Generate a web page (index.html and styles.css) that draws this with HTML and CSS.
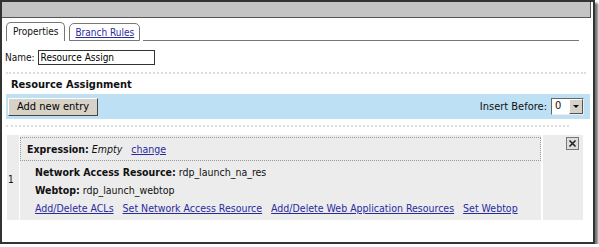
FILE: index.html
```html
<!DOCTYPE html>
<html>

<head>
    <title>Resource Assign</title>
    <link rel="stylesheet" href="styles.css">
</head>

<body>
    <div class="frame">
        <div class="titlebar"></div>

        <div class="tabs">
            <div class="tab active">Properties</div>
            <div class="tab"><a href="#">Branch Rules</a></div>
            <div class="tab-fill"></div>
        </div>

        <div class="name-row">
            <label>Name:</label>
            <input type="text" value="Resource Assign">
        </div>

        <div class="sep"></div>

        <h3>Resource Assignment</h3>
        <div class="toolbar">
            <button>Add new entry</button>
            <div class="insert">
                Insert Before:
                <span class="select"><span class="val">0</span><span class="arrow"></span></span>
            </div>
        </div>

        <div class="sep short"></div>

        <div class="entry">
            <div class="num">1</div>
            <div class="body">
                <div class="expr">
                    <strong>Expression:</strong> <em>Empty</em> <a href="#">change</a>
                </div>
                <div class="details">
                    <p><strong>Network Access Resource:</strong> rdp_launch_na_res</p>
                    <p><strong>Webtop:</strong> rdp_launch_webtop</p>
                    <p class="links">
                        <a href="#">Add/Delete ACLs</a>
                        <a href="#">Set Network Access Resource</a>
                        <a href="#">Add/Delete Web Application Resources</a>
                        <a href="#">Set Webtop</a>
                    </p>
                </div>
            </div>
            <div class="del">
                <span class="xbox">
                    <svg width="9" height="9" viewBox="0 0 9 9">
                        <path d="M1.5 1.5 L7.5 7.5 M7.5 1.5 L1.5 7.5" stroke="#222" stroke-width="1.6"/>
                    </svg>
                </span>
            </div>
        </div>
    </div>
</body>

</html>
```

FILE: styles.css
```css
body {
    margin: 0;
    padding: 0;
    background: #fff;
    font-family: "DejaVu Sans Condensed", "Liberation Sans", sans-serif;
    font-size: 10px;
    color: #111;
}

a {
    color: #2a2aa0;
}

.frame {
    width: 591px;
    height: 240px;
    border: 2px solid #333;
    box-shadow: 3px 3px 2px #777;
    background: #fff;
    overflow: hidden;
    white-space: nowrap;
}

.titlebar {
    height: 15px;
    background: #c4c4c4;
    border-bottom: 1px solid #555;
    border-right: 1px solid #555;
    margin-right: 2px;
}

.tabs {
    display: flex;
    align-items: flex-end;
    padding: 4px 14px 0 4px;
    height: 19px;
}

.tab {
    border: 1px solid #777;
    border-radius: 5px 5px 0 0;
    padding: 2px 5px 1px;
    margin-right: 3px;
    background: #fff;
    height: 13px;
    line-height: 13px;
}

.tab.active {
    border-bottom: none;
    height: 15px;
    padding: 2px 6px 1px;
    margin-right: 4px;
}

.tab-fill {
    flex: 1;
    border-bottom: 1px solid #777;
}

.name-row {
    padding: 9px 0 0 3px;
    display: flex;
    align-items: center;
    gap: 3px;
}

.name-row input {
    font: inherit;
    width: 111px;
    height: 13px;
    padding: 0 2px;
    border: 1px solid #333;
    margin: 0;
}

.sep {
    margin: 7px 7px 0 4px;
    border-top: 2px dotted #ddd;
}

.sep.short {
    margin-top: 6px;
    margin-right: 24px;
}

h3 {
    margin: 4px 0 3px 9px;
    font-size: 11px;
}

.toolbar {
    margin: 0 3px 0 4px;
    background: #bde0f5;
    height: 25px;
    display: flex;
    align-items: center;
    justify-content: space-between;
    padding: 0 6px 0 2px;
}

.toolbar button {
    font: inherit;
    font-size: 11px;
    background: #d6d2c8;
    border: 1px solid;
    border-color: #fff #444 #444 #fff;
    padding: 1px 8px;
    height: 18px;
}

.insert {
    display: flex;
    align-items: center;
    gap: 4px;
    font-size: 11px;
}

.select {
    display: flex;
    border: 1px solid;
    border-color: #666 #eee #eee #666;
    background: #fff;
    height: 15px;
}

.select .val {
    width: 14px;
    padding-left: 3px;
}

.select .arrow {
    width: 12px;
    background: #d6d2c8;
    border: 1px solid;
    border-color: #fff #555 #555 #fff;
    position: relative;
}

.select .arrow::after {
    content: "";
    position: absolute;
    left: 3px;
    top: 5px;
    border: 3px solid transparent;
    border-top: 3px solid #111;
}

.entry {
    margin: 8px 10px 0 5px;
    height: 85px;
    display: flex;
    background: #fff;
}

.num {
    width: 11px;
    background: #ececec;
    margin-right: 1px;
    display: flex;
    align-items: center;
    padding-left: 1px;
    padding-top: 4px;
}

.body {
    width: 521px;
    background: #ececec;
    padding-top: 2px;
    font-size: 10.5px;
}

.expr {
    border: 1px dotted #999;
    height: 22px;
    line-height: 22px;
    padding-left: 6px;
}

.expr a {
    margin-left: 6px;
}

.details {
    padding-left: 15px;
}

.details p {
    margin: 0;
    line-height: 18px;
}

.details p:first-child {
    margin-top: 2px;
}

.links a {
    margin-right: 6px;
}

.del {
    flex: 1;
    background: #ececec;
    margin-left: 2px;
    display: flex;
    justify-content: flex-end;
    padding: 2px 4px 0 0;
}

.xbox {
    width: 11px;
    height: 11px;
    border: 1px solid #777;
    background: #ddd;
    display: flex;
    align-items: center;
    justify-content: center;
}
```
